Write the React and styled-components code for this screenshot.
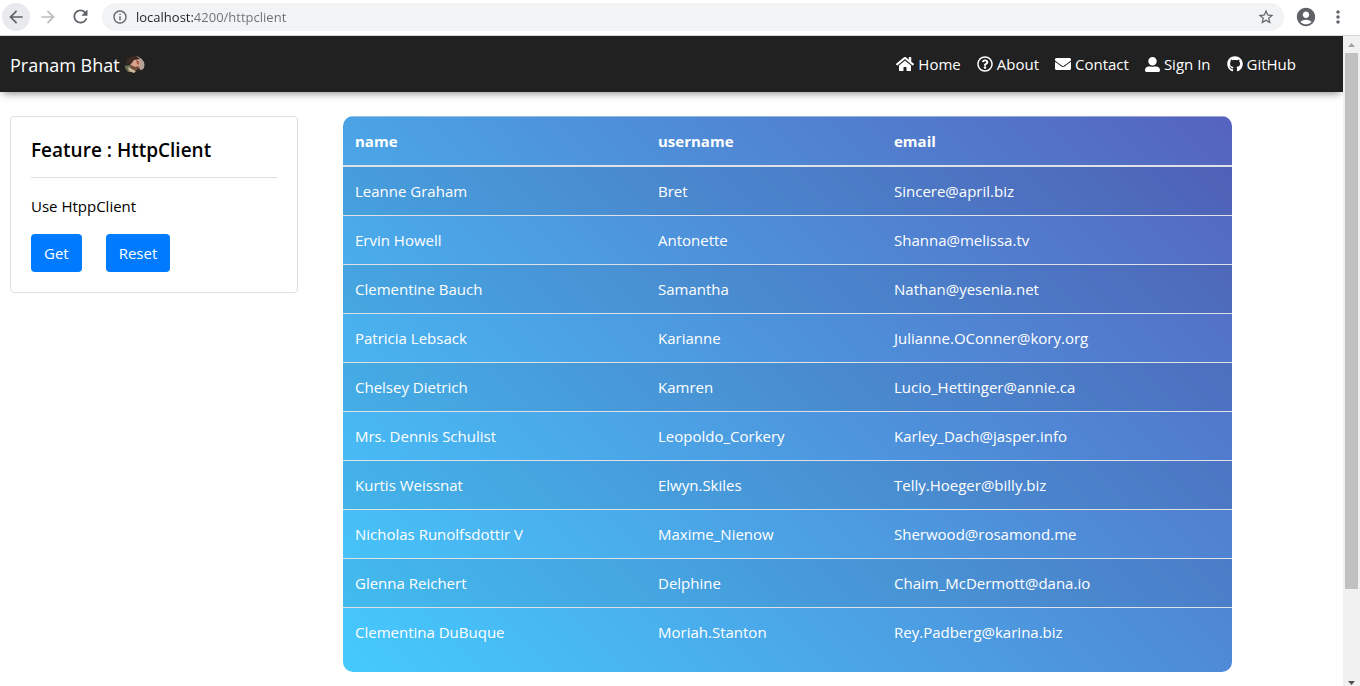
import React from 'react';
import styled, { createGlobalStyle } from 'styled-components';
import { FaHome, FaRegQuestionCircle, FaEnvelope, FaUserAlt, FaGithub } from 'react-icons/fa';
import {
  MdArrowBack,
  MdArrowForward,
  MdRefresh,
  MdInfoOutline,
  MdStarBorder,
  MdAccountCircle,
  MdMoreVert,
} from 'react-icons/md';

const GlobalStyle = createGlobalStyle`
  *, *::before, *::after { box-sizing: border-box; }
  body {
    margin: 0;
    color: #000;
    background: #fff;
    font-family: "Segoe UI", "Open Sans", "Noto Sans", sans-serif;
    font-size: 15px;
    line-height: 24px;
  }
`;

const Window = styled.div`
  display: flex;
  flex-direction: column;
  height: 100vh;
`;

const BrowserBar = styled.header`
  display: flex;
  align-items: center;
  flex: none;
  height: 36px;
  padding: 0 8px 2px 2px;
  border-bottom: 1px solid #d3d5d8;
  background: #fff;
`;

const IconButton = styled.button`
  display: grid;
  place-items: center;
  flex: none;
  width: 28px;
  height: 28px;
  padding: 0;
  border: 0;
  border-radius: 50%;
  color: ${({ $muted }) => ($muted ? '#babcbe' : '#5f6368')};
  background: ${({ $active }) => ($active ? '#e8eaed' : 'transparent')};
`;

const NavButtons = styled.div`
  display: flex;
  gap: 4px;
  margin-right: 8px;
`;

const AddressBar = styled.div`
  display: flex;
  align-items: center;
  flex: 1;
  height: 28px;
  padding: 0 4px 0 10px;
  border-radius: 14px;
  color: #5f6368;
  background: #f1f3f4;
`;

const AddressInput = styled.input`
  flex: 1;
  min-width: 0;
  height: 20px;
  margin-left: 8px;
  padding: 0;
  border: 0;
  outline: 0;
  font: inherit;
  font-size: 13px;
  color: #5f6368;
  -webkit-text-fill-color: transparent;
  background: linear-gradient(to right, #202124 58px, #6b6f74 58px);
  -webkit-background-clip: text;
  background-clip: text;
`;

const ProfileButtons = styled.div`
  display: flex;
  align-items: center;
  gap: 4px;
  margin-left: 8px;
`;

const Viewport = styled.div`
  display: flex;
  flex: 1;
  min-height: 0;
`;

const Page = styled.div`
  flex: 1;
  min-width: 0;
  overflow: hidden;
`;

const Navbar = styled.nav`
  display: flex;
  align-items: center;
  justify-content: space-between;
  height: 56px;
  padding: 0 47px 0 10px;
  color: #fff;
  background: #212121;
  box-shadow: 0 4px 8px -3px rgba(0, 0, 0, 0.5);
`;

const Brand = styled.a`
  display: flex;
  align-items: center;
  gap: 4px;
  padding-top: 2px;
  color: #fff;
  font-size: 18px;
  font-weight: 500;
  text-decoration: none;
`;

const NavLinks = styled.ul`
  display: flex;
  gap: 16px;
  margin: 0;
  padding: 0;
  list-style: none;
`;

const NavLink = styled.a`
  display: flex;
  align-items: center;
  gap: 4px;
  color: #fff;
  font-weight: 500;
  text-decoration: none;
`;

const Content = styled.main`
  display: flex;
  align-items: flex-start;
  gap: 45px;
  padding: 24px 111px 14px 10px;
`;

const Card = styled.section`
  flex: 0 0 288px;
  padding: 20px;
  border: 1px solid #dfdfdf;
  border-radius: 4px;
`;

const CardTitle = styled.h1`
  margin: 0;
  padding: 1px 0 15px;
  border-bottom: 1px solid #dfdfdf;
  font-size: 19px;
  font-weight: 600;
  line-height: 24px;
`;

const CardText = styled.p`
  margin: 16px 0;
`;

const Actions = styled.div`
  display: flex;
  gap: 24px;
`;

const PrimaryButton = styled.button`
  height: 38px;
  padding: 0 13px;
  border: 0;
  border-radius: 4px;
  font: inherit;
  color: #fff;
  background: #007bff;
`;

const TablePanel = styled.section`
  flex: 1;
  min-width: 0;
  padding-bottom: 16px;
  border-radius: 10px;
  overflow: hidden;
  background: linear-gradient(45deg, #45cafe, #5563be);
`;

const UserTable = styled.table`
  width: 100%;
  table-layout: fixed;
  border-collapse: separate;
  border-spacing: 0;
  color: #fff;
`;

const Column = styled.col`
  width: ${({ $width }) => $width};
`;

const HeaderCell = styled.th`
  height: 51px;
  padding: 0 12px;
  border-top: 1px solid rgba(222, 226, 230, 0.5);
  border-bottom: 2px solid #dee2e6;
  font-weight: 700;
  text-align: left;
`;

const Cell = styled.td`
  height: 49px;
  padding: 0 12px;
  border-top: 1px solid #dee2e6;
`;

const Row = styled.tr`
  &:nth-child(odd) { background: rgba(0, 0, 0, 0.05); }
  &:first-child ${Cell} {
    height: 48px;
    border-top: 0;
  }
`;

const ScrollTrack = styled.div`
  display: flex;
  flex-direction: column;
  align-items: center;
  flex: none;
  width: 17px;
  background: #f1f1f1;
`;

const ScrollArrow = styled.svg`
  flex: none;
  width: 17px;
  height: 17px;
  fill: ${({ $muted }) => ($muted ? '#a3a3a3' : '#505050')};
`;

const ScrollRail = styled.div`
  flex: 1;
  width: 13px;
`;

const ScrollThumb = styled.div`
  height: 87%;
  background: #c1c1c1;
`;

const Avatar = () => (
  <svg width="21" height="20" viewBox="0 0 21 20" role="img" aria-label="Profile">
    <defs>
      <clipPath id="avatar"><ellipse cx="10.5" cy="10" rx="10" ry="9" /></clipPath>
    </defs>
    <g clipPath="url(#avatar)">
      <rect width="21" height="20" fill="#2b2522" />
      <path d="M12 1h9v13l-5 1z" fill="#b3a199" />
      <path d="M0 11l6-1 3 7H0z" fill="#69704f" />
      <path d="M6 6l6-3 4 3v6l-4 3-5-2z" fill="#d9a48c" />
      <path d="M3 3l8-3 5 4-6 1-3 4-4-1z" fill="#3d2a22" />
      <path d="M12 5l3 1v4l-2-1z" fill="#a95f4b" />
      <path d="M7 10l4 2 4-1-1 3-4 2-3-2z" fill="#744a38" />
      <path d="M4 12l4 2 4 2-2 2-5-2z" fill="#c9b99e" />
    </g>
  </svg>
);

const links = [
  { label: 'Home', icon: FaHome, size: 18 },
  { label: 'About', icon: FaRegQuestionCircle, size: 16 },
  { label: 'Contact', icon: FaEnvelope, size: 16 },
  { label: 'Sign In', icon: FaUserAlt, size: 15 },
  { label: 'GitHub', icon: FaGithub, size: 16 },
];

const users = [
  ['Leanne Graham', 'Bret', 'Sincere@april.biz'],
  ['Ervin Howell', 'Antonette', 'Shanna@melissa.tv'],
  ['Clementine Bauch', 'Samantha', 'Nathan@yesenia.net'],
  ['Patricia Lebsack', 'Karianne', 'Julianne.OConner@kory.org'],
  ['Chelsey Dietrich', 'Kamren', 'Lucio_Hettinger@annie.ca'],
  ['Mrs. Dennis Schulist', 'Leopoldo_Corkery', 'Karley_Dach@jasper.info'],
  ['Kurtis Weissnat', 'Elwyn.Skiles', 'Telly.Hoeger@billy.biz'],
  ['Nicholas Runolfsdottir V', 'Maxime_Nienow', 'Sherwood@rosamond.me'],
  ['Glenna Reichert', 'Delphine', 'Chaim_McDermott@dana.io'],
  ['Clementina DuBuque', 'Moriah.Stanton', 'Rey.Padberg@karina.biz'],
];

export default function App() {
  return (
    <Window>
      <GlobalStyle />
      <BrowserBar>
        <NavButtons>
          <IconButton $active aria-label="Back"><MdArrowBack size={20} /></IconButton>
          <IconButton $muted aria-label="Forward"><MdArrowForward size={20} /></IconButton>
          <IconButton aria-label="Reload"><MdRefresh size={21} /></IconButton>
        </NavButtons>
        <AddressBar>
          <MdInfoOutline size={16} />
          <AddressInput aria-label="Address" defaultValue="localhost:4200/httpclient" />
          <IconButton aria-label="Bookmark"><MdStarBorder size={18} /></IconButton>
        </AddressBar>
        <ProfileButtons>
          <IconButton aria-label="Profile"><MdAccountCircle size={22} /></IconButton>
          <IconButton aria-label="Menu"><MdMoreVert size={20} /></IconButton>
        </ProfileButtons>
      </BrowserBar>
      <Viewport>
        <Page>
          <Navbar>
            <Brand href="#">Pranam Bhat<Avatar /></Brand>
            <NavLinks>
              {links.map(({ label, icon: Icon, size }) => (
                <li key={label}>
                  <NavLink href="#"><Icon size={size} />{label}</NavLink>
                </li>
              ))}
            </NavLinks>
          </Navbar>
          <Content>
            <Card>
              <CardTitle>Feature : HttpClient</CardTitle>
              <CardText>Use HtppClient</CardText>
              <Actions>
                <PrimaryButton>Get</PrimaryButton>
                <PrimaryButton>Reset</PrimaryButton>
              </Actions>
            </Card>
            <TablePanel>
              <UserTable>
                <colgroup>
                  <Column $width="303px" />
                  <Column $width="236px" />
                  <Column $width="auto" />
                </colgroup>
                <thead>
                  <tr>
                    <HeaderCell scope="col">name</HeaderCell>
                    <HeaderCell scope="col">username</HeaderCell>
                    <HeaderCell scope="col">email</HeaderCell>
                  </tr>
                </thead>
                <tbody>
                  {users.map((user) => (
                    <Row key={user[0]}>
                      {user.map((value) => <Cell key={value}>{value}</Cell>)}
                    </Row>
                  ))}
                </tbody>
              </UserTable>
            </TablePanel>
          </Content>
        </Page>
        <ScrollTrack>
          <ScrollArrow $muted viewBox="0 0 17 17"><path d="M5 11h7L8.500 7z" /></ScrollArrow>
          <ScrollRail><ScrollThumb /></ScrollRail>
          <ScrollArrow viewBox="0 0 17 17"><path d="M5 12h7L8.500 16z" /></ScrollArrow>
        </ScrollTrack>
      </Viewport>
    </Window>
  );
}
